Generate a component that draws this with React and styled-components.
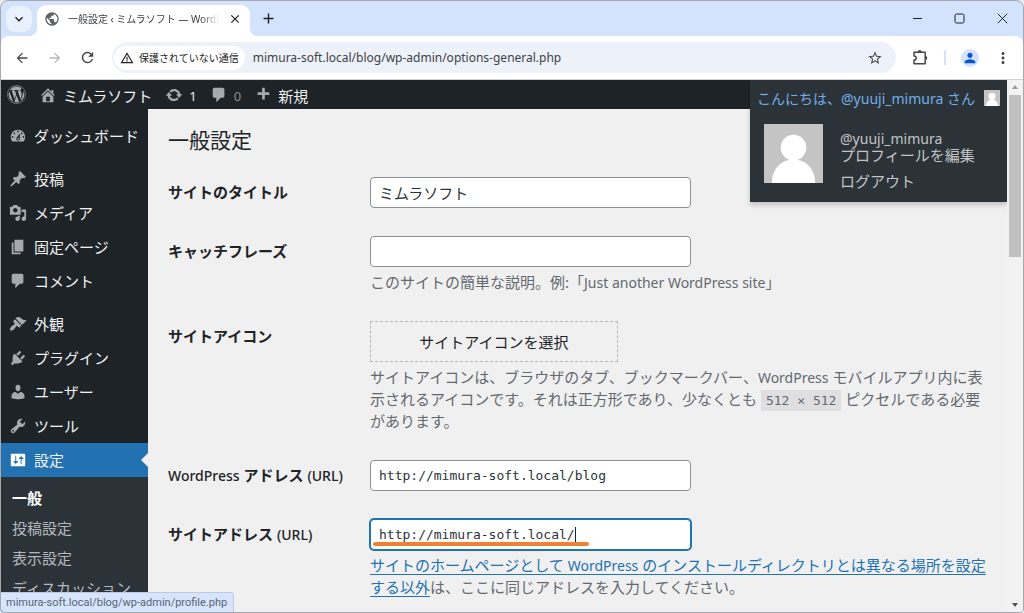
import React from "react";
import styled, { createGlobalStyle } from "styled-components";
import {
  MdArrowBack,
  MdArrowForward,
  MdRefresh,
  MdStarBorder,
  MdPublic,
  MdMoreVert,
  MdPerson,
  MdWarningAmber,
  MdAdd,
  MdClose,
  MdKeyboardArrowDown,
} from "react-icons/md";
import { FaWordpress } from "react-icons/fa";

const sans = `"Noto Sans", "Noto Sans CJK JP", sans-serif`;
const mono = `"DejaVu Sans Mono", monospace`;

const GlobalStyle = createGlobalStyle`
  *, *::before, *::after { box-sizing: border-box; }
  html, body { margin: 0; height: 100%; background: #e9ebee; }
  body { font-family: ${sans}; font-size: 15px; color: #3c434a; }
  button, input { font: inherit; color: inherit; }
  button { border: 0; padding: 0; background: none; cursor: pointer; }
  a { color: inherit; text-decoration: none; }
  ul { list-style: none; margin: 0; padding: 0; }
  h1, p { margin: 0; }
`;

const icons = {
  home: "M16 8.5l1.53 1.53-1.06 1.06L10 4.6l-6.47 6.49-1.06-1.06L10 2.5l4 4v-2h2v4zm-6-2.46l6 5.99V18H4v-5.97zM12 17v-5H8v5h4z",
  update:
    "M10.2 3.28c3.53 0 6.43 2.61 6.92 6h2.08l-3.5 4-3.5-4h2.32c-.45-1.97-2.21-3.45-4.32-3.45-1.45 0-2.73.71-3.54 1.78L4.95 5.66C6.23 4.2 8.11 3.28 10.2 3.28zm-.4 13.44c-3.52 0-6.43-2.61-6.92-6H.8l3.5-4c1.17 1.33 2.33 2.67 3.5 4H5.48c.45 1.97 2.21 3.45 4.32 3.45 1.45 0 2.73-.71 3.54-1.78l1.71 1.95c-1.28 1.46-3.15 2.38-5.25 2.38z",
  comment:
    "M5 2h9c1.1 0 2 .9 2 2v7c0 1.1-.9 2-2 2h-2l-5 5v-5H5c-1.1 0-2-.9-2-2V4c0-1.1.9-2 2-2z",
  plus: "M17 7v3h-5v5H9v-5H4V7h5V2h3v5h5z",
  dashboard:
    "M3.76 16h12.48c1.1-1.37 1.76-3.11 1.76-5 0-4.42-3.58-8-8-8s-8 3.58-8 8c0 1.89.66 3.63 1.76 5zM10 4c.55 0 1 .45 1 1s-.45 1-1 1-1-.45-1-1 .45-1 1-1zM6 6c.55 0 1 .45 1 1s-.45 1-1 1-1-.45-1-1 .45-1 1-1zm8 0c.55 0 1 .45 1 1s-.45 1-1 1-1-.45-1-1 .45-1 1-1zm-5.37 5.55L12 7v6c0 1.1-.9 2-2 2s-2-.9-2-2c0-.57.24-1.08.63-1.45zM4 10c.55 0 1 .45 1 1s-.45 1-1 1-1-.45-1-1 .45-1 1-1zm12 0c.55 0 1 .45 1 1s-.45 1-1 1-1-.45-1-1 .45-1 1-1zm-5 3c0-.55-.45-1-1-1s-1 .45-1 1 .45 1 1 1 1-.45 1-1z",
  post: "M10.44 3.02l1.82-1.82 6.36 6.35-1.83 1.82c-1.05-.68-2.48-.57-3.41.36l-.75.75c-.92.93-1.04 2.35-.35 3.41l-1.83 1.82-2.41-2.41-2.8 2.79c-.42.42-3.38 2.71-3.8 2.29s1.86-3.39 2.28-3.81l2.79-2.79L4.1 9.36l1.83-1.82c1.05.69 2.48.57 3.4-.36l.75-.75c.93-.92 1.05-2.35.36-3.41z",
  media:
    "M13 11V4c0-.55-.45-1-1-1h-1.67L9 1H5L3.67 3H2c-.55 0-1 .45-1 1v7c0 .55.45 1 1 1h10c.55 0 1-.45 1-1zM7 4.5c1.38 0 2.5 1.12 2.5 2.5S8.38 9.5 7 9.5 4.5 8.38 4.5 7 5.62 4.5 7 4.5zM14 6h5v10.5c0 1.38-1.12 2.5-2.5 2.5S14 17.88 14 16.5s1.12-2.5 2.5-2.5c.17 0 .34.02.5.05V9h-3V6zm-4 8.05V13h2v3.5c0 1.38-1.12 2.5-2.5 2.5S7 17.88 7 16.5 8.12 14 9.5 14c.17 0 .34.02.5.05z",
  page: "M6 15V2h10v13H6zm-1 1h8v2H3V5h2v11z",
  appearance:
    "M14.48 11.06L7.41 3.99l1.5-1.5c.5-.56 2.3-.47 3.51.32 1.21.8 1.43 1.28 2.91 2.1 1.18.64 2.45 1.26 4.45.85zm-.71.71L6.7 4.7 4.93 6.47c-.39.39-.39 1.02 0 1.41l1.06 1.06c.39.39.39 1.03 0 1.42-.6.6-1.43 1.11-2.21 1.69-.35.26-.7.53-1.01.84C1.43 14.23.4 16.08 1.4 17.07c.99 1 2.84-.03 4.18-1.36.31-.31.58-.66.85-1.02.57-.78 1.08-1.61 1.69-2.21.39-.39 1.02-.39 1.41 0l1.06 1.06c.39.39 1.02.39 1.41 0z",
  plugins:
    "M13.11 4.36L9.87 7.6 8 5.73l3.24-3.24c.35-.34 1.05-.2 1.56.32.52.51.66 1.21.31 1.55zm-8 1.77l.91-1.12 9.01 9.01-1.19.84c-.71.71-2.63 1.16-3.82 1.16H6.14L4.9 17.26c-.59.59-1.54.59-2.12 0-.59-.58-.59-1.53 0-2.12l1.24-1.24v-3.88c0-1.13.4-3.19 1.09-3.89zm7.26 3.97l3.24-3.24c.34-.35 1.04-.21 1.55.31.52.51.66 1.21.31 1.55l-3.24 3.25z",
  users:
    "M10 9.25c-2.27 0-2.73-3.44-2.73-3.44C7 4.02 7.82 2 9.97 2c2.16 0 2.98 2.02 2.71 3.81 0 0-.41 3.44-2.68 3.44zm0 2.57L12.72 10c2.39 0 4.52 2.33 4.52 4.53v2.49s-3.65 1.13-7.24 1.13c-3.65 0-7.24-1.13-7.24-1.13v-2.49c0-2.25 1.94-4.48 4.47-4.48z",
  tools:
    "M16.68 9.77c-1.34 1.34-3.3 1.67-4.95.99l-5.41 6.52c-.99.99-2.59.99-3.58 0s-.99-2.59 0-3.57l6.52-5.42c-.68-1.65-.35-3.61.99-4.95 1.28-1.28 3.12-1.62 4.72-1.06l-2.89 2.89 2.82 2.82 2.86-2.87c.53 1.58.18 3.39-1.08 4.65zM3.81 16.21c.4.39 1.04.39 1.43 0 .4-.4.4-1.04 0-1.43-.39-.4-1.03-.4-1.43 0-.39.39-.39 1.03 0 1.43z",
  settings:
    "M18 16V4c0-.55-.45-1-1-1H3c-.55 0-1 .45-1 1v12c0 .55.45 1 1 1h14c.55 0 1-.45 1-1zM8 11h1c.55 0 1 .45 1 1s-.45 1-1 1H8v1.5c0 .28-.22.5-.5.5s-.5-.22-.5-.5V13H6c-.55 0-1-.45-1-1s.45-1 1-1h1V5.5c0-.28.22-.5.5-.5s.5.22.5.5V11zm5-2h-1c-.55 0-1-.45-1-1s.45-1 1-1h1V5.5c0-.28.22-.5.5-.5s.5.22.5.5V7h1c.55 0 1 .45 1 1s-.45 1-1 1h-1v5.5c0 .28-.22.5-.5.5s-.5-.22-.5-.5V9z",
};

const Glyph = styled.svg`
  flex: none;
  width: 18px;
  height: 18px;
  fill: currentColor;
`;

function Icon({ name }) {
  return (
    <Glyph viewBox="0 0 20 20" aria-hidden="true">
      <path d={icons[name]} />
    </Glyph>
  );
}

/* ---------- browser frame ---------- */

const BrowserWindow = styled.div`
  position: relative;
  display: flex;
  flex-direction: column;
  height: 100vh;
  overflow: hidden;
  border: 1px solid #a5a8ad;
  border-radius: 8px 8px 4px 4px;
  background: #d3e3fd;
`;

const TabStrip = styled.div`
  flex: none;
  display: flex;
  align-items: center;
  height: 35px;
  padding-left: 5px;
`;

const TabSearch = styled.button`
  display: grid;
  place-items: center;
  width: 26px;
  height: 26px;
  border-radius: 9px;
  background: #e9f0fe;
  color: #1f1f1f;
`;

const Tab = styled.div`
  position: relative;
  display: flex;
  align-items: center;
  align-self: flex-end;
  width: 213px;
  height: 31px;
  margin-left: 5px;
  padding: 0 7px 4px;
  border-radius: 9px 9px 0 0;
  background: #fff;
  color: #5f6368;

  &::before,
  &::after {
    content: "";
    position: absolute;
    bottom: 0;
    width: 8px;
    height: 8px;
  }
  &::before {
    right: 100%;
    background: radial-gradient(circle at 0 0, transparent 8px, #fff 8px);
  }
  &::after {
    left: 100%;
    background: radial-gradient(circle at 100% 0, transparent 8px, #fff 8px);
  }
`;

const TabTitle = styled.span`
  flex: 1;
  margin: 0 8px;
  overflow: hidden;
  white-space: nowrap;
  color: #3c4043;
  font-size: 10px;
  line-height: 20px;
  mask-image: linear-gradient(to right, #000 88%, transparent);
`;

const StripButton = styled.button`
  display: grid;
  place-items: center;
  width: ${(p) => p.$width}px;
  height: 28px;
  color: #1f1f1f;
`;

const WindowControls = styled.div`
  display: flex;
  margin-left: auto;
`;

const Toolbar = styled.div`
  flex: none;
  display: flex;
  align-items: center;
  height: 44px;
  padding: 0 4px;
  border-bottom: 1px solid #cfd3d8;
  border-radius: 8px 8px 0 0;
  background: #fff;
`;

const ToolButton = styled.button`
  flex: none;
  display: grid;
  place-items: center;
  width: 33px;
  height: 30px;
  color: ${(p) => (p.$dim ? "#b4b7bb" : "#474747")};
`;

const AddressBar = styled.div`
  flex: 1;
  display: flex;
  align-items: center;
  height: 31px;
  margin: 0 8px;
  padding: 0 5px 0 2px;
  border-radius: 16px;
  background: #edf1fa;
`;

const SecurityChip = styled.button`
  flex: none;
  display: flex;
  align-items: center;
  gap: 5px;
  height: 24px;
  padding: 0 6px;
  border-radius: 12px;
  background: #fff;
  color: #202124;
  font-size: 10px;
  white-space: nowrap;
`;

const AddressInput = styled.input`
  flex: 1;
  min-width: 0;
  margin-left: 8px;
  padding: 0;
  border: 0;
  outline: 0;
  background: none;
  color: #3f4247;
  font-size: 12px;
`;

const ToolDivider = styled.span`
  width: 2px;
  height: 15px;
  margin: 0 7px;
  background: #d3e3fd;
`;

const ProfileBadge = styled.span`
  display: grid;
  place-items: center;
  width: 18px;
  height: 18px;
  border-radius: 50%;
  background: #d3e3fd;
  color: #0b57d0;
`;

const Viewport = styled.div`
  flex: 1;
  display: flex;
  min-height: 0;
`;

const StatusBubble = styled.div`
  position: absolute;
  left: 0;
  bottom: 0;
  height: 20px;
  padding: 0 6px 0 5px;
  border-top: 1px solid #bccae4;
  border-right: 1px solid #bccae4;
  border-radius: 0 4px 0 0;
  background: #d6e4fc;
  color: #5a6575;
  font-family: Roboto, sans-serif;
  font-size: 11px;
  line-height: 19px;
  white-space: nowrap;
`;

const ScrollTrack = styled.div`
  flex: none;
  display: flex;
  flex-direction: column;
  align-items: center;
  width: 16px;
  padding: 5px 0;
  background: #f2f2f3;
`;

const ScrollArrow = styled.span`
  width: 0;
  height: 0;
  border: 3px solid transparent;
  ${(p) =>
    p.$down
      ? "margin-top: auto; border-top: 4px solid #505050; border-bottom: 0;"
      : "border-bottom: 4px solid #9a9a9a; border-top: 0; margin-bottom: 6px;"}
`;

const ScrollThumb = styled.div`
  width: 12px;
  height: 31%;
  background: #c1c1c1;
`;

/* ---------- WordPress admin ---------- */

const Admin = styled.div`
  position: relative;
  flex: 1;
  display: flex;
  flex-direction: column;
  min-width: 0;
  overflow: hidden;
  background: #f0f0f1;
`;

const AdminBar = styled.header`
  flex: none;
  display: flex;
  align-items: flex-start;
  justify-content: space-between;
  height: 29px;
  background: #1d2327;
`;

const BarItems = styled.nav`
  display: flex;
  align-items: center;
  gap: 13px;
  height: 29px;
  padding-left: 6px;
`;

const BarLink = styled.a`
  display: flex;
  align-items: center;
  gap: 6px;
  line-height: 29px;
  white-space: nowrap;
  color: #a7aaad;
`;

const BarText = styled.span`
  padding-top: 4px;
  color: ${(p) => (p.$muted ? "#8c8f94" : "#f0f0f1")};
  font-size: ${(p) => (p.$number ? 13 : 15)}px;
`;

const Account = styled.div`
  z-index: 2;
  width: 257px;
  background: #2c3338;
  box-shadow: 0 3px 5px rgba(0, 0, 0, 0.2);
  white-space: nowrap;
`;

const AccountToggle = styled.a`
  display: flex;
  align-items: center;
  justify-content: space-between;
  height: 35px;
  padding: 0 7px;
  color: #72aee6;
  font-size: 14px;
`;

const AccountBody = styled.div`
  display: flex;
  gap: 17px;
  height: 87px;
  padding: 9px 14px;
`;

const AccountLinks = styled.div`
  display: flex;
  flex-direction: column;
  padding-top: 7px;
  color: #c3c4c7;
  line-height: 16px;
`;

const AccountName = styled.span`
  font-size: 14px;
`;

const LogoutLink = styled.a`
  margin-top: 10px;
`;

const AvatarArt = styled.svg`
  flex: none;
  width: ${(p) => p.$size}px;
  height: ${(p) => p.$size}px;
  background: #c4c4c4;
`;

function Avatar({ size }) {
  return (
    <AvatarArt $size={size} viewBox="0 0 60 60" aria-hidden="true">
      <circle cx="30" cy="24" r="13" fill="#fff" />
      <path d="M8 60c0-14 9-24 22-24s22 10 22 24z" fill="#fff" />
    </AvatarArt>
  );
}

const AdminBody = styled.div`
  flex: 1;
  display: flex;
  min-height: 0;
`;

const Sidebar = styled.nav`
  flex: none;
  width: 147px;
  padding-top: 10px;
  overflow: hidden;
  background: #1d2327;
  white-space: nowrap;
`;

const MenuItem = styled.li`
  margin-top: ${(p) => (p.$gap ? 9 : 0)}px;
`;

const MenuLink = styled.a`
  position: relative;
  display: flex;
  align-items: center;
  gap: 7px;
  height: 34px;
  padding: 0 0 1px 8px;
  background: ${(p) => (p.$current ? "#2271b1" : "transparent")};
  color: ${(p) => (p.$current ? "#fff" : "#a7aaad")};

  &::after {
    content: "";
    display: ${(p) => (p.$current ? "block" : "none")};
    position: absolute;
    right: 0;
    border: 7px solid transparent;
    border-right-color: #f0f0f1;
    border-left: 0;
  }
`;

const MenuLabel = styled.span`
  color: #f0f0f1;
`;

const SubMenu = styled.ul`
  padding: 6px 0 24px 11px;
  background: #2c3338;
`;

const SubLink = styled.a`
  display: block;
  color: ${(p) => (p.$current ? "#fff" : "#b4b9be")};
  font-weight: ${(p) => (p.$current ? 700 : 400)};
  line-height: 30px;
`;

const Content = styled.main`
  flex: 1;
  min-width: 0;
  padding: 16px 20px 0;
  overflow: hidden;
`;

const PageTitle = styled.h1`
  color: #1d2327;
  font-size: 21px;
  font-weight: 400;
  line-height: 30px;
`;

const Form = styled.form`
  display: flex;
  flex-direction: column;
  gap: 28px;
  margin-top: 22px;
`;

const FieldRow = styled.div`
  display: grid;
  grid-template-columns: 202px minmax(0, 1fr);
  white-space: nowrap;
`;

const FieldLabel = styled.label`
  color: #1d2327;
  font-weight: 700;
  line-height: 31px;
`;

const Latin = styled.span`
  font-size: 14px;
  font-weight: 500;
  line-height: 1;
`;

const InputBox = styled.div`
  position: relative;
  width: 321px;
  max-width: 100%;
`;

const TextInput = styled.input`
  display: block;
  width: 100%;
  height: 31px;
  padding: 0 8px;
  border: 1px solid ${(p) => (p.$active ? "#2271b1" : "#8c8f94")};
  border-radius: 4px;
  outline: 0;
  background: #fff;
  box-shadow: ${(p) => (p.$active ? "0 0 0 1px #2271b1" : "none")};
  color: #2c3338;
  font-family: ${(p) => (p.$code ? mono : sans)};
  font-size: ${(p) => (p.$code ? 13 : 15)}px;
`;

const Caret = styled.span`
  position: absolute;
  top: 8px;
  left: calc(9px + 25ch);
  width: 1px;
  height: 16px;
  background: #1d2327;
  font-family: ${mono};
  font-size: 13px;
`;

const Marker = styled.span`
  position: absolute;
  left: 3px;
  bottom: 4px;
  width: 216px;
  height: 4px;
  border-radius: 2px;
  background: #f08033;
`;

const IconButton = styled.button`
  display: block;
  width: 248px;
  height: 41px;
  border: 1px dashed #b4b9be;
  color: #1d2327;
`;

const Description = styled.p`
  margin-top: 4px;
  color: #646970;
  line-height: 22px;
`;

const En = styled.span`
  font-size: 14px;
  line-height: 1;
`;

const SizeCode = styled.code`
  padding: 3px 5px;
  background: #dfdfe1;
  font-family: ${mono};
  font-size: 13px;
  line-height: 1;
`;

const HelpLink = styled.a`
  color: #2271b1;
  text-decoration: underline;
  text-underline-offset: 3px;
`;

const menu = [
  { icon: "dashboard", label: "ダッシュボード" },
  { icon: "post", label: "投稿", gap: true },
  { icon: "media", label: "メディア" },
  { icon: "page", label: "固定ページ" },
  { icon: "comment", label: "コメント" },
  { icon: "appearance", label: "外観", gap: true },
  { icon: "plugins", label: "プラグイン" },
  { icon: "users", label: "ユーザー" },
  { icon: "tools", label: "ツール" },
  { icon: "settings", label: "設定", current: true },
];

const subMenu = ["一般", "投稿設定", "表示設定", "ディスカッション"];

function BrowserChrome() {
  return (
    <>
      <TabStrip>
        <TabSearch aria-label="タブを検索">
          <MdKeyboardArrowDown size={16} />
        </TabSearch>
        <Tab>
          <MdPublic size={16} />
          <TabTitle>一般設定 ‹ ミムラソフト — WordPress</TabTitle>
          <StripButton $width={16} aria-label="タブを閉じる">
            <MdClose size={14} />
          </StripButton>
        </Tab>
        <StripButton $width={36} aria-label="新しいタブ">
          <MdAdd size={17} />
        </StripButton>
        <WindowControls>
          <StripButton $width={42} aria-label="最小化">
            <svg width="11" height="11" stroke="currentColor">
              <path d="M1 5.5h9" />
            </svg>
          </StripButton>
          <StripButton $width={43} aria-label="最大化">
            <svg width="11" height="11" fill="none" stroke="currentColor">
              <rect x="1" y="1" width="9" height="9" rx="1.5" />
            </svg>
          </StripButton>
          <StripButton $width={42} aria-label="閉じる">
            <svg width="11" height="11" stroke="currentColor">
              <path d="M.8.8l9.4 9.4M10.2.8L.8 10.2" />
            </svg>
          </StripButton>
        </WindowControls>
      </TabStrip>
      <Toolbar>
        <ToolButton aria-label="戻る">
          <MdArrowBack size={16} />
        </ToolButton>
        <ToolButton $dim aria-label="進む">
          <MdArrowForward size={16} />
        </ToolButton>
        <ToolButton aria-label="再読み込み">
          <MdRefresh size={17} />
        </ToolButton>
        <AddressBar>
          <SecurityChip>
            <MdWarningAmber size={14} />
            保護されていない通信
          </SecurityChip>
          <AddressInput
            aria-label="アドレス"
            defaultValue="mimura-soft.local/blog/wp-admin/options-general.php"
          />
          <ToolButton aria-label="ブックマーク">
            <MdStarBorder size={16} />
          </ToolButton>
        </AddressBar>
        <ToolButton aria-label="拡張機能">
          <svg width="17" height="17" viewBox="0 0 17 17">
            <path
              d="M2 3.2h11.2v11.5H2v-3.6a2 2 0 0 0 0-4.2z"
              fill="none"
              stroke="currentColor"
              strokeWidth="1.5"
              strokeLinejoin="round"
            />
            <path
              d="M5.8 3a1.9 1.9 0 0 1 3.8 0zM13.4 7.1a1.9 1.9 0 0 1 0 3.8z"
              fill="currentColor"
            />
          </svg>
        </ToolButton>
        <ToolDivider />
        <ToolButton aria-label="プロフィール">
          <ProfileBadge>
            <MdPerson size={16} />
          </ProfileBadge>
        </ToolButton>
        <ToolButton aria-label="メニュー">
          <MdMoreVert size={18} />
        </ToolButton>
      </Toolbar>
    </>
  );
}

function TopBar() {
  return (
    <AdminBar>
      <BarItems aria-label="ツールバー">
        <BarLink href="#about" aria-label="WordPress">
          <FaWordpress size={19} />
        </BarLink>
        <BarLink href="#site">
          <Icon name="home" />
          <BarText>ミムラソフト</BarText>
        </BarLink>
        <BarLink href="#updates">
          <Icon name="update" />
          <BarText $number>1</BarText>
        </BarLink>
        <BarLink href="#comments">
          <Icon name="comment" />
          <BarText $number $muted>
            0
          </BarText>
        </BarLink>
        <BarLink href="#new">
          <Icon name="plus" />
          <BarText>新規</BarText>
        </BarLink>
      </BarItems>
      <Account>
        <AccountToggle href="#account">
          <span>こんにちは、@yuuji_mimura さん</span>
          <Avatar size={16} />
        </AccountToggle>
        <AccountBody>
          <Avatar size={59} />
          <AccountLinks>
            <AccountName>@yuuji_mimura</AccountName>
            <a href="#profile">プロフィールを編集</a>
            <LogoutLink href="#logout">ログアウト</LogoutLink>
          </AccountLinks>
        </AccountBody>
      </Account>
    </AdminBar>
  );
}

function AdminMenu() {
  return (
    <Sidebar aria-label="メインメニュー">
      <ul>
        {menu.map((m) => (
          <MenuItem key={m.label} $gap={m.gap}>
            <MenuLink href={"#" + m.icon} $current={m.current}>
              <Icon name={m.icon} />
              <MenuLabel>{m.label}</MenuLabel>
            </MenuLink>
          </MenuItem>
        ))}
      </ul>
      <SubMenu>
        {subMenu.map((label, i) => (
          <li key={label}>
            <SubLink href={"#sub" + i} $current={i === 0}>
              {label}
            </SubLink>
          </li>
        ))}
      </SubMenu>
    </Sidebar>
  );
}

function SettingsForm() {
  return (
    <Form>
      <FieldRow>
        <FieldLabel htmlFor="blogname">サイトのタイトル</FieldLabel>
        <InputBox>
          <TextInput id="blogname" defaultValue="ミムラソフト" />
        </InputBox>
      </FieldRow>
      <FieldRow>
        <FieldLabel htmlFor="tagline">キャッチフレーズ</FieldLabel>
        <div>
          <InputBox>
            <TextInput id="tagline" />
          </InputBox>
          <Description>
            このサイトの簡単な説明。例:「<En>Just another WordPress site</En>」
          </Description>
        </div>
      </FieldRow>
      <FieldRow>
        <FieldLabel htmlFor="siteicon">サイトアイコン</FieldLabel>
        <div>
          <IconButton id="siteicon" type="button">
            サイトアイコンを選択
          </IconButton>
          <Description>
            サイトアイコンは、ブラウザのタブ、ブックマークバー、<En>WordPress</En>{" "}
            モバイルアプリ内に表
            <br />
            示されるアイコンです。それは正方形であり、少なくとも{" "}
            <SizeCode>512 × 512</SizeCode> ピクセルである必要
            <br />
            があります。
          </Description>
        </div>
      </FieldRow>
      <FieldRow>
        <FieldLabel htmlFor="siteurl">
          <Latin>WordPress</Latin> アドレス <Latin>(URL)</Latin>
        </FieldLabel>
        <InputBox>
          <TextInput
            id="siteurl"
            $code
            defaultValue="http://mimura-soft.local/blog"
          />
        </InputBox>
      </FieldRow>
      <FieldRow>
        <FieldLabel htmlFor="home">
          サイトアドレス <Latin>(URL)</Latin>
        </FieldLabel>
        <div>
          <InputBox>
            <TextInput
              id="home"
              $code
              $active
              defaultValue="http://mimura-soft.local/"
            />
            <Caret />
            <Marker />
          </InputBox>
          <Description>
            <HelpLink href="#help">
              サイトのホームページとして <En>WordPress</En>{" "}
              のインストールディレクトリとは異なる場所を設定
              <br />
              する以外
            </HelpLink>
            は、ここに同じアドレスを入力してください。
          </Description>
        </div>
      </FieldRow>
    </Form>
  );
}

export default function App() {
  return (
    <>
      <GlobalStyle />
      <BrowserWindow>
        <BrowserChrome />
        <Viewport>
          <Admin>
            <TopBar />
            <AdminBody>
              <AdminMenu />
              <Content>
                <PageTitle>一般設定</PageTitle>
                <SettingsForm />
              </Content>
            </AdminBody>
          </Admin>
          <ScrollTrack>
            <ScrollArrow />
            <ScrollThumb />
            <ScrollArrow $down />
          </ScrollTrack>
        </Viewport>
        <StatusBubble>mimura-soft.local/blog/wp-admin/profile.php</StatusBubble>
      </BrowserWindow>
    </>
  );
}
